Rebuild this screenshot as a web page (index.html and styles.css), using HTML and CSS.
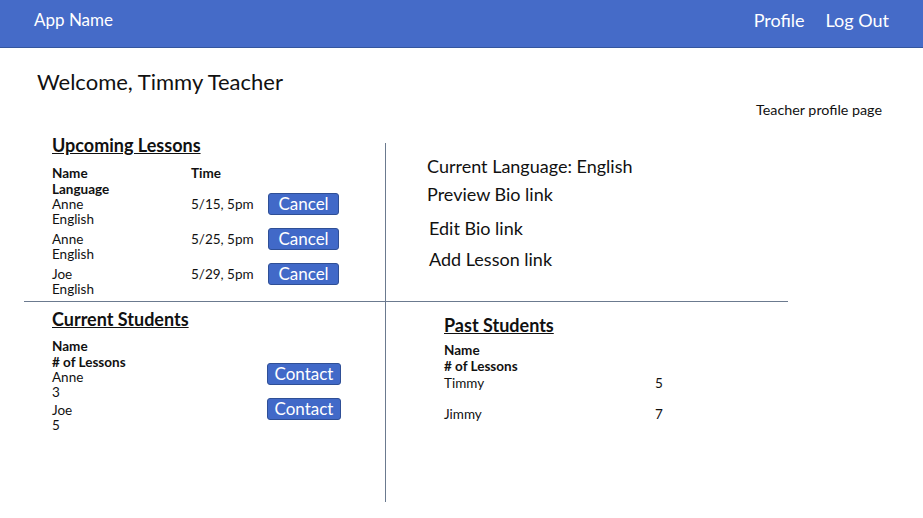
FILE: index.html
```html
<!DOCTYPE html>
<html>
<head>
<meta charset="utf-8">
<title>Teacher profile</title>
<link rel="stylesheet" href="styles.css">
</head>
<body>
<header class="topbar">
  <div class="brand">App Name</div>
  <nav class="nav">
    <a class="nav-link">Profile</a>
    <a class="nav-link">Log Out</a>
  </nav>
</header>
<main class="page">
  <h1 class="welcome">Welcome, Timmy Teacher</h1>
  <div class="page-label">Teacher profile page</div>
  <div class="board">
    <section class="cell cell-tl">
      <h2 class="section-title title-tl">Upcoming Lessons</h2>
      <div class="lessons">
        <div class="th">Name<br>Language</div>
        <div class="th">Time</div>
        <div></div>
        <div class="td">Anne<br>English</div>
        <div class="td">5/15, 5pm</div>
        <div class="act"><button class="btn">Cancel</button></div>
        <div class="td">Anne<br>English</div>
        <div class="td">5/25, 5pm</div>
        <div class="act"><button class="btn">Cancel</button></div>
        <div class="td">Joe<br>English</div>
        <div class="td">5/29, 5pm</div>
        <div class="act"><button class="btn">Cancel</button></div>
      </div>
    </section>
    <section class="cell cell-tr">
      <div class="info">Current Language: English</div>
      <div class="info info-2">Preview Bio link</div>
      <div class="info info-3">Edit Bio link</div>
      <div class="info info-4">Add Lesson link</div>
    </section>
    <section class="cell cell-bl">
      <h2 class="section-title">Current Students</h2>
      <div class="students">
        <div class="students-text">
          <div class="th">Name<br># of Lessons</div>
          <div class="td">Anne<br>3</div>
          <div class="td student-row">Joe<br>5</div>
        </div>
        <div class="students-actions">
          <button class="btn btn-contact">Contact</button>
          <button class="btn btn-contact">Contact</button>
        </div>
      </div>
    </section>
    <section class="cell cell-br">
      <h2 class="section-title">Past Students</h2>
      <div class="past">
        <div class="th past-head">Name<br># of Lessons</div>
        <div class="td">Timmy</div>
        <div class="td">5</div>
        <div class="td past-row2">Jimmy</div>
        <div class="td past-row2">7</div>
      </div>
    </section>
  </div>
</main>
</body>
</html>
```
FILE: styles.css
```css
* { box-sizing: border-box; }
body {
  margin: 0;
  font-family: Lato, "Open Sans", sans-serif;
  color: #111;
  background: #fff;
}
.topbar {
  height: 48px;
  background: #456bc8;
  border-bottom: 1px solid #34569e;
  display: flex;
  align-items: center;
  justify-content: space-between;
  padding: 0 34px 8px 34px;
  color: #fff;
  font-size: 18px;
}
.brand { font-size: 17px; }
.nav { display: flex; gap: 21px; }
.nav-link { color: #fff; }
.welcome {
  margin: 20px 0 0 37px;
  font-size: 22px;
  font-weight: normal;
  line-height: 28px;
}
.page-label {
  text-align: right;
  padding-right: 41px;
  font-size: 14.3px;
  line-height: 18px;
  margin-top: 5px;
}
.board {
  margin: 24px 0 0 24px;
  width: 764px;
  display: grid;
  grid-template-columns: 362px 402px;
  grid-template-rows: 159px 200px;
}
.cell-tl, .cell-bl { border-right: 1px solid #6b7a8f; }
.cell-tl, .cell-tr { border-bottom: 1px solid #6b7a8f; }
.cell-tl { padding: 0 0 0 28px; }
.section-title {
  margin: 0;
  font-size: 18px;
  font-weight: bold;
  text-decoration: underline;
  line-height: 22px;
}
.title-tl { margin-top: -9px; }
.th { font-weight: bold; font-size: 13.5px; line-height: 15.5px; }
.td { font-size: 13.5px; line-height: 15px; }
.lessons {
  display: grid;
  grid-template-columns: 139px 77px auto;
  row-gap: 5px;
  margin-top: 10px;
}
.lessons .th:first-child { margin-bottom: -5px; }
.act { display: flex; align-items: flex-start; }
.btn {
  font-family: inherit;
  font-size: 17px;
  line-height: 20px;
  height: 22px;
  padding: 0;
  color: #fff;
  background: #4169c8;
  border: 1px solid #2f4f96;
  border-radius: 3px;
  width: 71px;
}
.act .btn { margin-top: -4px; }
.cell-tr { padding: 12px 0 0 41px; }
.info { font-size: 18px; line-height: 22px; }
.info-2 { margin-top: 6px; }
.info-3 { margin-top: 12px; padding-left: 2px; }
.info-4 { margin-top: 9px; padding-left: 2px; }
.cell-bl { padding: 6px 0 0 28px; }
.students {
  display: flex;
  margin-top: 9px;
}
.students-text { width: 215px; }
.student-row { margin-top: 3px; }
.students-actions {
  display: flex;
  flex-direction: column;
  align-items: flex-start;
  gap: 13px;
  padding-top: 24px;
}
.btn-contact { width: 74px; }
.cell-br { padding: 12px 0 0 58px; }
.past {
  display: grid;
  grid-template-columns: 211px auto;
  margin-top: 7px;
}
.past-head { grid-column: 1 / 3; margin-bottom: 2px; }
.past-row2 { margin-top: 16px; }
```
